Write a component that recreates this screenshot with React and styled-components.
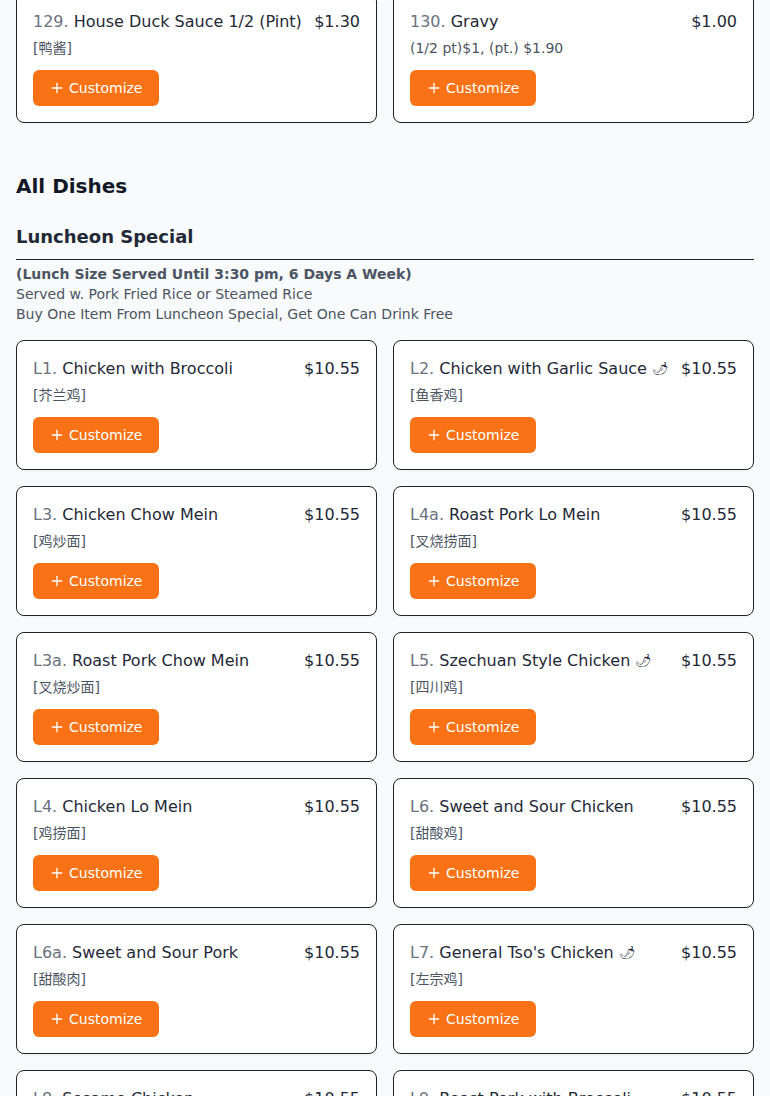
import React from "react";
import styled, { createGlobalStyle } from "styled-components";
import { Plus } from "lucide-react";

const GlobalStyle = createGlobalStyle`
  html, body {
    margin: 0;
    padding: 0;
    background: #f9fafb;
    overflow: hidden;
  }
  body {
    font-family: "DejaVu Sans", "Noto Sans CJK SC", sans-serif;
    color: #1f2937;
  }
  * {
    box-sizing: border-box;
  }
`;

const sauces = [
  { num: "129.", name: "House Duck Sauce 1/2 (Pint)", price: "$1.30", sub: "[鸭酱]" },
  { num: "130.", name: "Gravy", price: "$1.00", sub: "(1/2 pt)$1, (pt.) $1.90" },
];

const luncheon = [
  { num: "L1.", name: "Chicken with Broccoli", price: "$10.55", sub: "[芥兰鸡]" },
  { num: "L2.", name: "Chicken with Garlic Sauce", spicy: true, price: "$10.55", sub: "[鱼香鸡]" },
  { num: "L3.", name: "Chicken Chow Mein", price: "$10.55", sub: "[鸡炒面]" },
  { num: "L4a.", name: "Roast Pork Lo Mein", price: "$10.55", sub: "[叉烧捞面]" },
  { num: "L3a.", name: "Roast Pork Chow Mein", price: "$10.55", sub: "[叉烧炒面]" },
  { num: "L5.", name: "Szechuan Style Chicken", spicy: true, price: "$10.55", sub: "[四川鸡]" },
  { num: "L4.", name: "Chicken Lo Mein", price: "$10.55", sub: "[鸡捞面]" },
  { num: "L6.", name: "Sweet and Sour Chicken", price: "$10.55", sub: "[甜酸鸡]" },
  { num: "L6a.", name: "Sweet and Sour Pork", price: "$10.55", sub: "[甜酸肉]" },
  { num: "L7.", name: "General Tso's Chicken", spicy: true, price: "$10.55", sub: "[左宗鸡]" },
  { num: "L8.", name: "Sesame Chicken", price: "$10.55", sub: "[芝麻鸡]" },
  { num: "L9.", name: "Roast Pork with Broccoli", price: "$10.55", sub: "[芥兰叉烧]" },
];

function DishCard({ dish }) {
  return (
    <Card>
      <TitleRow>
        <Name>
          <Num>{dish.num}</Num> {dish.name}
          {dish.spicy && <Spicy>🌶</Spicy>}
        </Name>
        <Price>{dish.price}</Price>
      </TitleRow>
      <Sub>{dish.sub}</Sub>
      <CustomizeButton type="button">
        <Plus size={16} strokeWidth={2} />
        Customize
      </CustomizeButton>
    </Card>
  );
}

export default function App() {
  return (
    <Page>
      <GlobalStyle />
      <Grid $top>
        {sauces.map((d) => (
          <DishCard key={d.num} dish={d} />
        ))}
      </Grid>

      <AllTitle>All Dishes</AllTitle>

      <Category>
        <CategoryTitle>Luncheon Special</CategoryTitle>
        <Notes>
          <strong>(Lunch Size Served Until 3:30 pm, 6 Days A Week)</strong>
          <span>Served w. Pork Fried Rice or Steamed Rice</span>
          <span>Buy One Item From Luncheon Special, Get One Can Drink Free</span>
        </Notes>
        <Grid>
          {luncheon.map((d) => (
            <DishCard key={d.num} dish={d} />
          ))}
        </Grid>
      </Category>
    </Page>
  );
}

const Page = styled.main`
  padding: 0 16px 16px;
  display: flex;
  flex-direction: column;
`;

const Grid = styled.div`
  display: grid;
  grid-template-columns: 1fr 1fr;
  gap: 16px;
  margin-top: ${(p) => (p.$top ? "-7px" : "16px")};
`;

const Card = styled.div`
  background: #fff;
  border: 1px solid #1f2328;
  border-radius: 8px;
  padding: 16px;
  display: flex;
  flex-direction: column;
  align-items: flex-start;
  box-shadow: 0 1px 2px rgba(0, 0, 0, 0.04);
`;

const TitleRow = styled.div`
  width: 100%;
  height: 24px;
  display: flex;
  justify-content: space-between;
  align-items: flex-start;
  gap: 8px;
  font-size: 16px;
  line-height: 24px;
`;

const Name = styled.div`
  color: #1f2937;
  white-space: nowrap;
`;

const Num = styled.span`
  color: #6b7280;
`;

const Spicy = styled.span`
  display: inline-block;
  height: 24px;
  line-height: 24px;
  vertical-align: top;
  overflow: hidden;
  margin-left: 5px;
  font-size: 13px;
`;

const Price = styled.div`
  color: #1f2937;
  white-space: nowrap;
`;

const Sub = styled.div`
  margin-top: 4px;
  font-size: 14px;
  line-height: 20px;
  color: #4b5563;
`;

const CustomizeButton = styled.button`
  margin-top: 12px;
  height: 36px;
  padding: 0 16px;
  display: inline-flex;
  align-items: center;
  gap: 4px;
  border: none;
  border-radius: 6px;
  background: #f97316;
  color: #fff;
  font-family: "DejaVu Sans", sans-serif;
  font-size: 14px;
  cursor: pointer;
`;

const AllTitle = styled.h2`
  margin: 49px 0 0;
  font-size: 20px;
  line-height: 28px;
  font-weight: 700;
  color: #111827;
`;

const Category = styled.section`
  margin-top: 23px;
  display: flex;
  flex-direction: column;
`;

const CategoryTitle = styled.h3`
  margin: 0;
  padding-bottom: 8px;
  border-bottom: 1px solid #1f2328;
  font-size: 18px;
  line-height: 28px;
  font-weight: 700;
  color: #1f2937;
`;

const Notes = styled.div`
  margin-top: 4px;
  display: flex;
  flex-direction: column;
  font-size: 14px;
  line-height: 20px;
  color: #4b5563;

  strong {
    font-weight: 700;
  }
`;
